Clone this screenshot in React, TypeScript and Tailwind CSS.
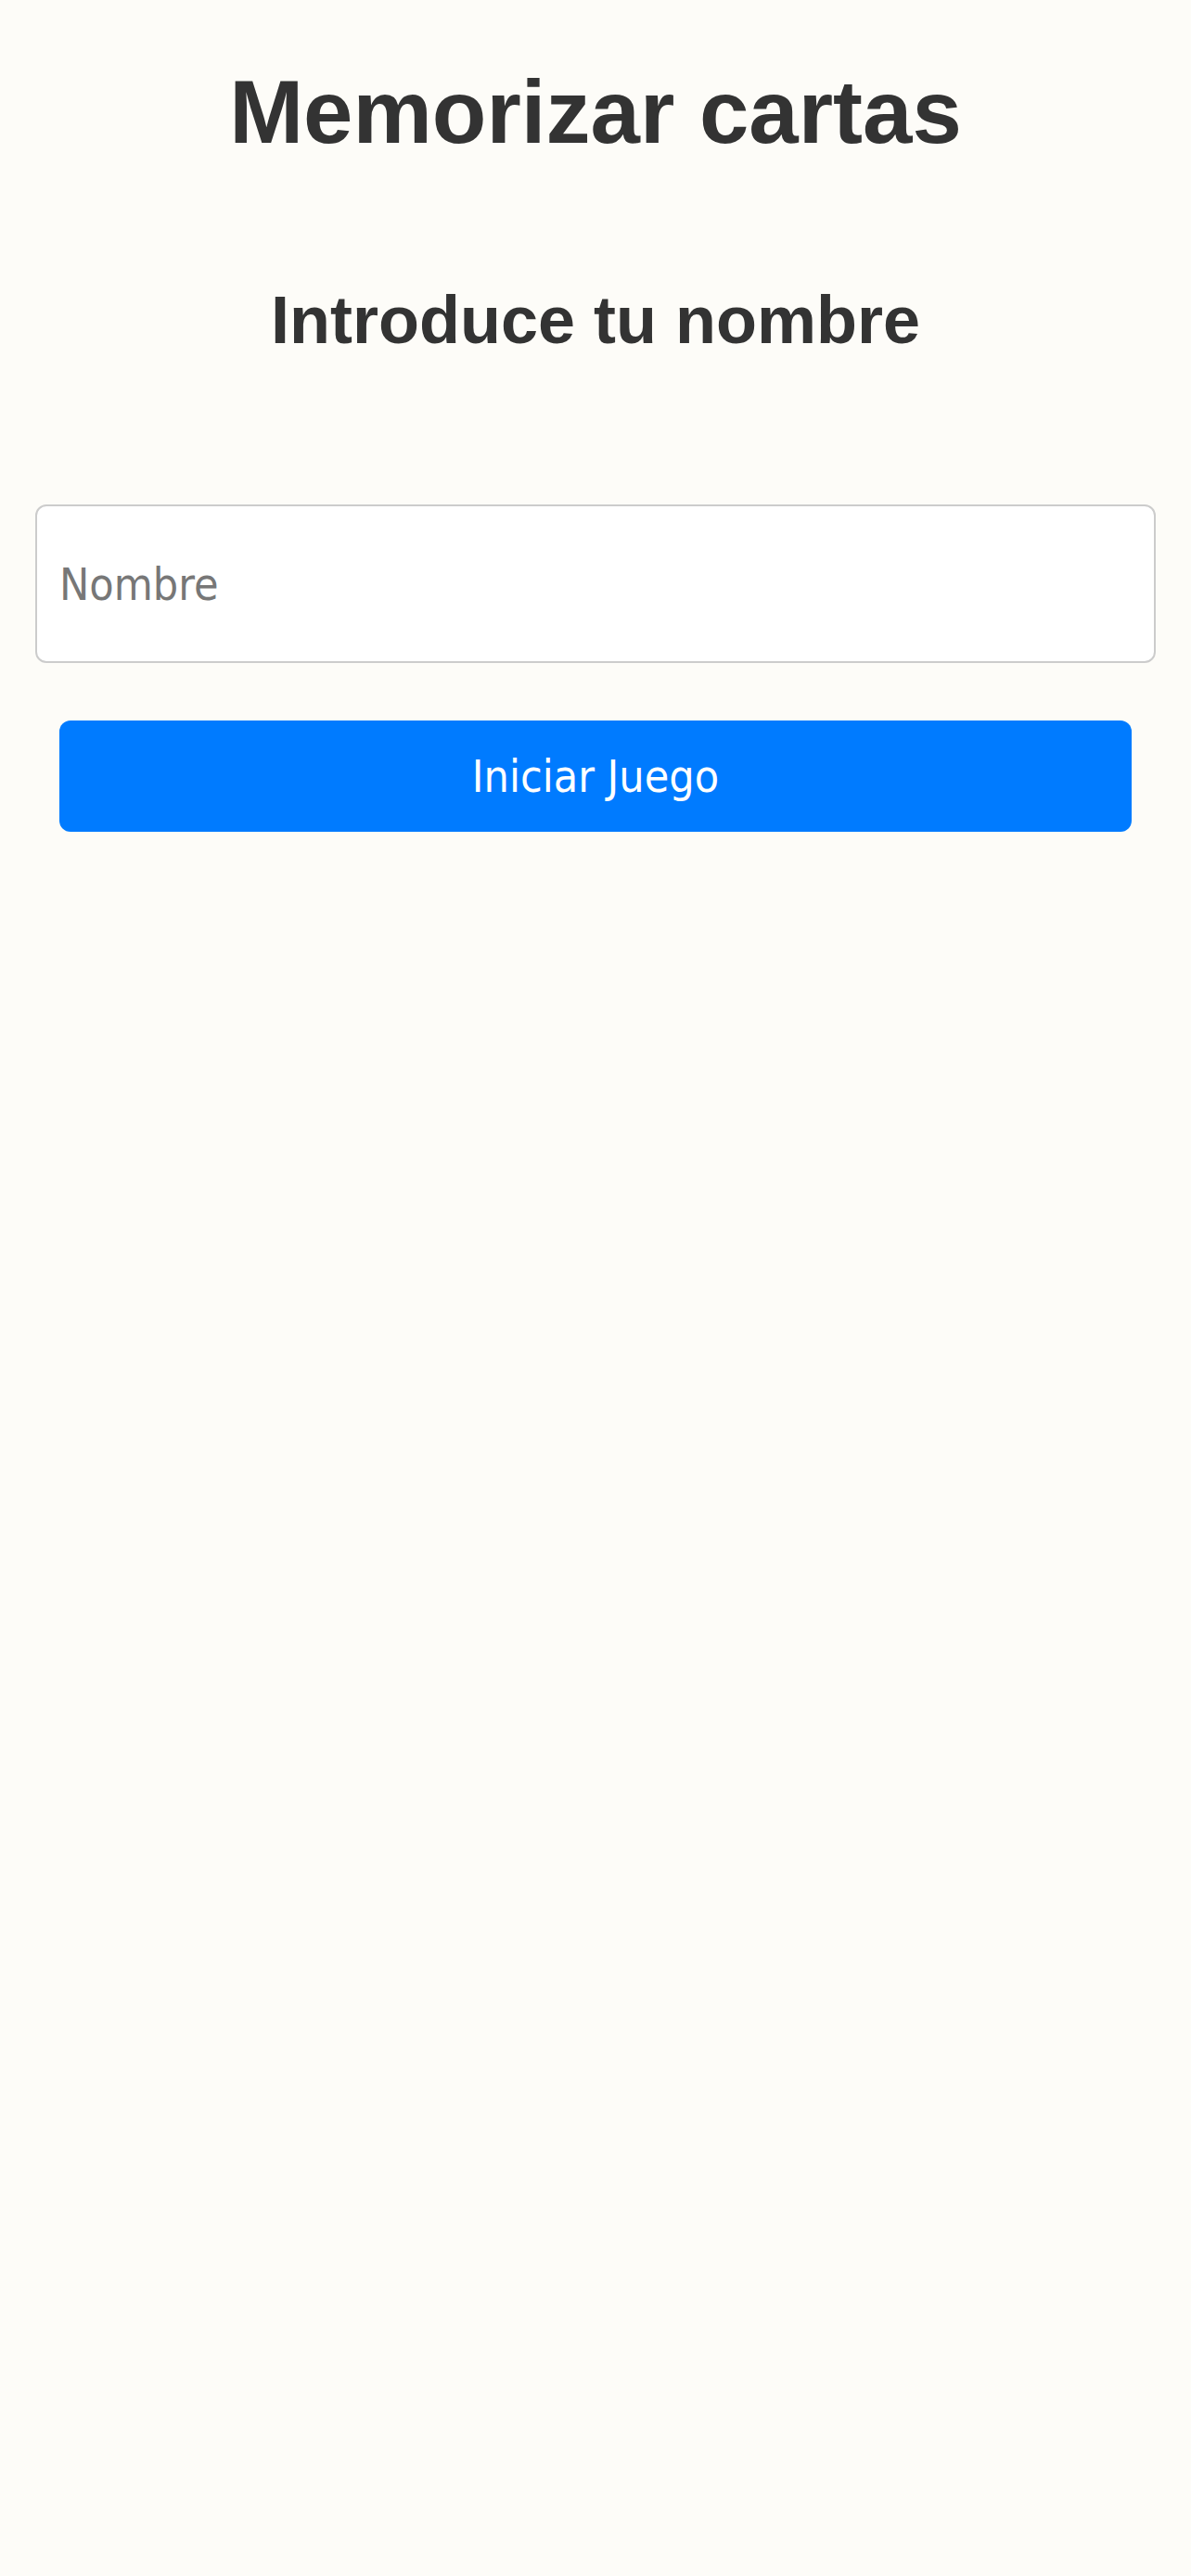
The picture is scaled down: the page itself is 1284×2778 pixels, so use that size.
import React, { useState } from 'react';

export default function App() {
  const [name, setName] = useState('');

  return (
    <div className="min-h-[2778px] w-full bg-[#fdfcf8] text-[#333333]">
      {/* Header */}
      <div className="pt-[66px] text-center font-['Liberation_Sans',Arial,sans-serif] font-bold">
        <h1 className="text-[96px] leading-[110px]">Memorizar cartas</h1>
        <h2 className="mt-[128px] text-[72px] leading-[83px]">Introduce tu nombre</h2>
      </div>

      {/* Form */}
      <div className="mt-[157px] flex flex-col px-[38px] font-['DejaVu_Sans_Condensed','DejaVu_Sans',sans-serif]">
        <input
          type="text"
          value={name}
          onChange={e => setName(e.target.value)}
          placeholder="Nombre"
          className="h-[171px] w-full rounded-[12px] border-2 border-[#cccccc] bg-white pl-[24px] text-[48px] text-[#333333] outline-none placeholder:text-[#777777]"
        />
        <button className="mx-[26px] mt-[62px] h-[120px] rounded-[12px] bg-[#007bff] text-[48px] text-white">
          Iniciar Juego
        </button>
      </div>
    </div>
  );
}
